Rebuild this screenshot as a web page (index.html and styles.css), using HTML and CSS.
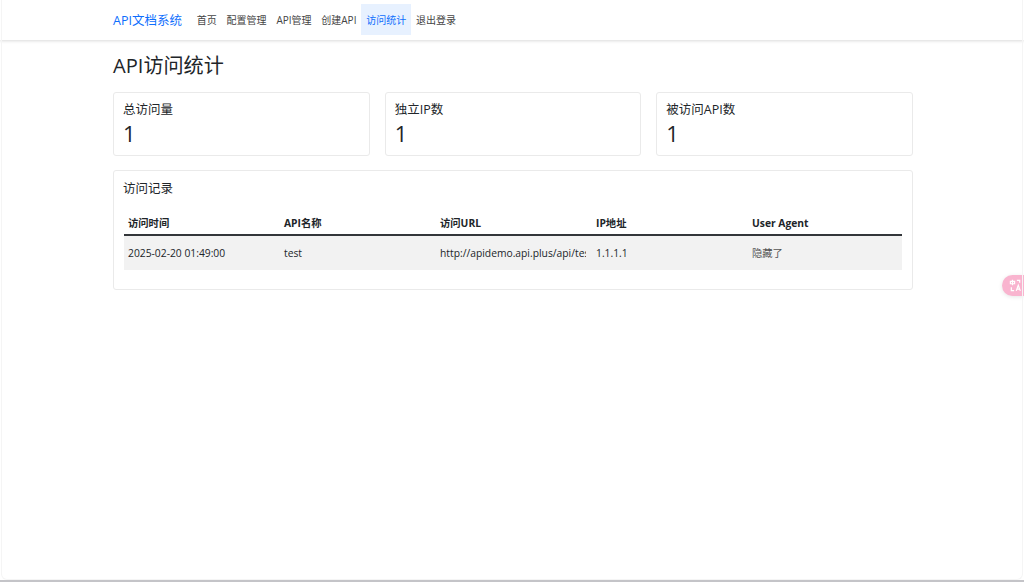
FILE: index.html
```html
<!DOCTYPE html>
<html lang="en">
<head>
    <meta charset="UTF-8" />
    <meta name="viewport" content="width=device-width, initial-scale=1" />
    <title>API访问统计</title>
    <link rel="stylesheet" href="styles.css">
</head>
<body>
<nav class="navbar">
    <div class="container nav-inner">
        <a class="brand" href="#">API文档系统</a>
        <a class="nav-link" href="#">首页</a>
        <a class="nav-link" href="#">配置管理</a>
        <a class="nav-link" href="#">API管理</a>
        <a class="nav-link" href="#">创建API</a>
        <a class="nav-link active" href="#">访问统计</a>
        <a class="nav-link" href="#">退出登录</a>
    </div>
</nav>

<main class="container">
    <h1>API访问统计</h1>

    <div class="stats">
        <div class="card stat">
            <div class="stat-label">总访问量</div>
            <div class="stat-value">1</div>
        </div>
        <div class="card stat">
            <div class="stat-label">独立IP数</div>
            <div class="stat-value">1</div>
        </div>
        <div class="card stat">
            <div class="stat-label">被访问API数</div>
            <div class="stat-value">1</div>
        </div>
    </div>

    <div class="card records">
        <div class="records-title">访问记录</div>
        <table>
            <thead>
                <tr>
                    <th>访问时间</th>
                    <th>API名称</th>
                    <th>访问URL</th>
                    <th>IP地址</th>
                    <th>User Agent</th>
                </tr>
            </thead>
            <tbody>
                <tr>
                    <td>2025-02-20 01:49:00</td>
                    <td>test</td>
                    <td><div class="url">http://apidemo.api.plus/api/test</div></td>
                    <td>1.1.1.1</td>
                    <td class="agent">隐藏了</td>
                </tr>
            </tbody>
        </table>
    </div>
</main>

<div class="translate-btn">
    <svg width="13" height="13" viewBox="0 0 14 14" fill="none" stroke="#fff" stroke-width="1.3">
        <path d="M1.5 2.5h4.5v2.6H1.5zM3.75 0.8v6" />
        <path d="M8.5 1.5h3V4M5.5 12.5h-3V9" />
        <path d="M7.8 12.8l2.2-6 2.2 6M8.6 10.8h2.8" />
    </svg>
</div>

<div class="window-edge"></div>
</body>
</html>
```

FILE: styles.css
```css
html, body {
  height: 100%;
}
body {
  font-family: "Open Sans", "Noto Sans CJK SC", sans-serif;
  font-size: 10px;
  color: #212529;
  background: #fff;
  margin: 0;
  overflow: hidden;
}
.container {
  width: 800px;
  margin: 0 111px 0 113px;
}
.navbar {
  height: 40px;
  background: #fff;
  box-shadow: 0 1px 3px rgba(0,0,0,0.15);
}
.nav-inner {
  display: flex;
  align-items: center;
  height: 39px;
}
.brand {
  font-size: 12.5px;
  color: #0d6efd;
  text-decoration: none;
  margin-right: 10px;
}
.nav-link {
  display: flex;
  align-items: center;
  height: 31px;
  padding: 0 4.9px;
  color: #444;
  text-decoration: none;
}
.nav-link.active {
  color: #0d6efd;
  background: #e7f1ff;
}
h1 {
  font-size: 20.1px;
  font-weight: 400;
  line-height: 24px;
  margin: 14px 0 14px;
}
.stats {
  display: grid;
  grid-template-columns: repeat(3, 1fr);
  gap: 15px;
  margin-bottom: 14px;
}
.card {
  background: #fff;
  border: 1px solid #eaeaea;
  border-radius: 3px;
}
.stat {
  height: 64px;
  box-sizing: border-box;
  padding: 9px 9px;
}
.stat-label {
  font-size: 12.5px;
  line-height: 16px;
}
.stat-value {
  font-size: 22px;
  line-height: 30px;
}
.records {
  height: 120px;
  box-sizing: border-box;
  padding: 10px;
}
.records-title {
  font-size: 12.5px;
  line-height: 15px;
  margin: 0 0 15px -1px;
}
table {
  width: 100%;
  border-collapse: collapse;
  table-layout: fixed;
  font-size: 10.3px;
}
th {
  text-align: left;
  font-weight: 700;
  width: 156px;
  box-sizing: border-box;
  height: 24px;
  padding: 0 4px;
  border-bottom: 2px solid #33363a;
}
th:last-child {
  width: auto;
}
td {
  height: 34px;
  padding: 0 4px;
  line-height: 14px;
  background: #f2f2f2;
  white-space: nowrap;
}
.url {
  width: 146px;
  overflow: hidden;
}
.agent {
  color: #555;
}
.translate-btn {
  position: absolute;
  right: 0;
  top: 275px;
  width: 22px;
  height: 21px;
  box-sizing: border-box;
  padding-left: 4px;
  display: flex;
  align-items: center;
  justify-content: center;
  background: #f9b4cf;
  border-radius: 11px 0 0 11px;
  box-shadow: 0 1px 4px rgba(0,0,0,0.1);
}
.window-edge {
  position: absolute;
  left: 0;
  right: 0;
  top: 0;
  bottom: 0;
  border-bottom: 2px solid #c4c4c8;
  pointer-events: none;
}
.window-edge::after {
  content: "";
  position: absolute;
  left: 1px;
  right: 1px;
  top: 0;
  bottom: 0;
  border: 1px solid #f5f5f5;
  border-top: none;
  border-radius: 0 0 6px 6px;
}
```
